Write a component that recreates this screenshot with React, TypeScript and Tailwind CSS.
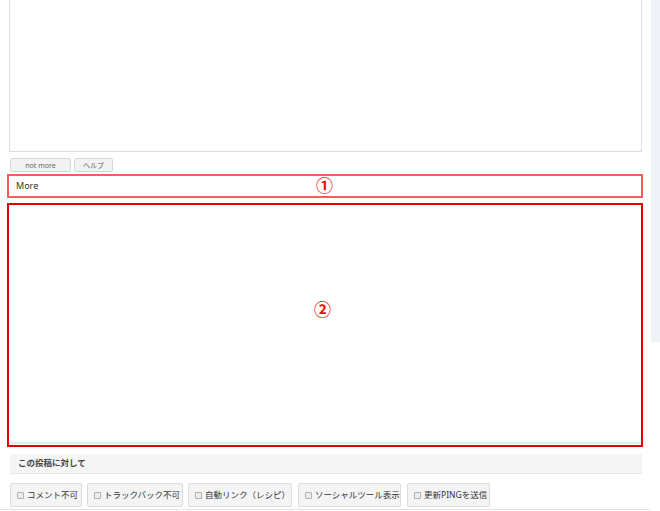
const OPTIONS = [
  { label: "コメント不可", w: "w-[72px]" },
  { label: "トラックバック不可", w: "w-[96px]" },
  { label: "自動リンク（レシピ）", w: "w-[104px]" },
  { label: "ソーシャルツール表示", w: "w-[103px] ml-[1px]" },
  { label: "更新PINGを送信", w: "w-[83px] ml-[1px]" },
];

export default function App() {
  return (
    <div
      className="w-[660px] h-[511px] overflow-hidden bg-white flex text-[#333]"
      style={{ fontFamily: '"Noto Sans", "Noto Sans CJK JP", sans-serif' }}
    >
      <div className="w-[651px] flex flex-col">
        {/* main editor */}
        <div className="ml-[9px] w-[633px] h-[152px] border border-t-0 border-[#dcdcdc] bg-white" />

        <div className="mt-[6px] ml-[10px] flex gap-[3px]">
          <button className="w-[61px] h-[14px] border border-[#d6d6d6] bg-[#f2f2f2] rounded-[2px] text-[7px] leading-none text-[#666]">
            not more
          </button>
          <button className="w-[39px] h-[14px] border border-[#d6d6d6] bg-[#f2f2f2] rounded-[2px] text-[7px] leading-none text-[#666]">
            ヘルプ
          </button>
        </div>

        {/* ① */}
        <div className="relative mt-[2px] ml-[7px] w-[636px] h-[24px] border-2 border-[#ff5a5a] flex items-center pl-[7px]">
          <span className="text-[9px] text-[#333]">More</span>
          <span className="absolute left-[307px] top-0 text-[17px] leading-[20px] font-bold text-[#ee1111]">
            ①
          </span>
        </div>

        {/* ② */}
        <div className="relative mt-[5px] ml-[7px] w-[636px] h-[244px] border-2 border-[#e60000]">
          <div className="w-full h-[239px] border-b-2 border-[#e6e9ee] bg-white" />
          <span className="absolute left-[305px] top-[95px] text-[17px] leading-[20px] font-bold text-[#ee1111]">
            ②
          </span>
        </div>

        <div className="mt-[7px] ml-[10px] w-[632px] h-[20px] bg-[#f5f5f5] border-b border-[#e6e6e6] flex items-center pl-[8px]">
          <span className="text-[8.5px] font-bold text-[#444]">この投稿に対して</span>
        </div>

        <div className="mt-[9px] ml-[10px] flex gap-[5px]">
          {OPTIONS.map((o) => (
            <label
              key={o.label}
              className={`${o.w} h-[24px] flex items-center gap-[3px] pl-[6px] border border-[#dcdcdc] bg-[#f4f4f4] rounded-[2px]`}
            >
              <span className="w-[7px] h-[7px] border border-[#b0b0b0] bg-[#ececec] rounded-[1px] shrink-0" />
              <span className="text-[8.5px] leading-none whitespace-nowrap text-[#333]">{o.label}</span>
            </label>
          ))}
        </div>

        <div className="mt-[2px] h-px w-[650px] bg-[#e2e2e2]" />
      </div>

      <div className="w-[9px] h-[342px] bg-[#eef2f7]" />
    </div>
  );
}
